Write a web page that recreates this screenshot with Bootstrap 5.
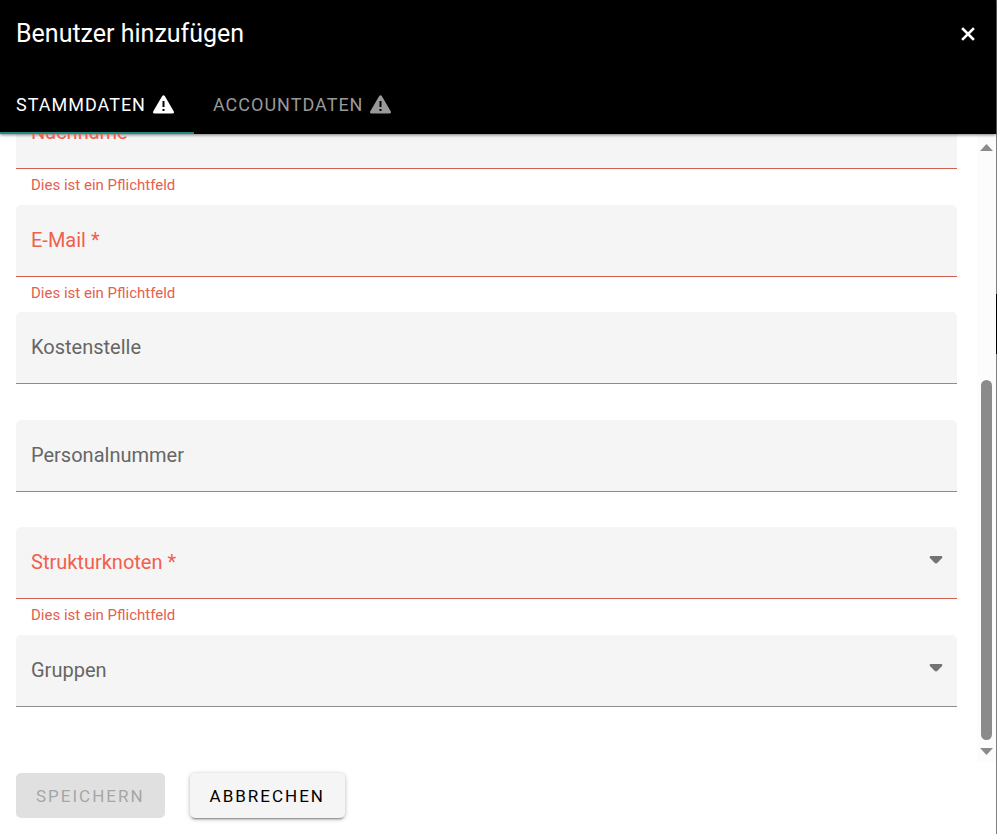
<!DOCTYPE html>
<html lang="de">
<head>
<meta charset="utf-8">
<meta name="viewport" content="width=device-width, initial-scale=1">
<title>Benutzer hinzufügen</title>
<link href="https://cdn.jsdelivr.net/npm/bootstrap@5.3.0/dist/css/bootstrap.min.css" rel="stylesheet">
<style>
  body { font-family: Roboto, "Liberation Sans", sans-serif; color: #000; background: #fff; }
  .dialog { flex: 1 1 0; min-width: 0; }
  /* sliver of the page behind the dialog */
  .backdrop-edge { flex: 0 0 1px; background: linear-gradient(#666 134px, #808080 134px 294px, #000 294px 354px, #808080 354px); }
  .dialog-head { background: #000; color: #fff; z-index: 1; box-shadow: 0 1px 3px rgba(0,0,0,.5); }
  .title-row { padding: 18px 16px 24px; }
  .dialog-title { font-size: 25px; line-height: 32px; font-weight: 400; }
  .close-btn { width: 24px; height: 24px; color: #fff; }
  .tab-btn { padding: 4px 20px 0 16px; height: 60px; border: 0; border-bottom: 2px solid transparent; border-radius: 0; background: none; color: #999; font-size: 18px; line-height: 24px; font-weight: 400; letter-spacing: 1px; gap: 7px; }
  .tab-btn + .tab-btn { padding-left: 19px; }
  .tab-btn svg { margin-bottom: 2px; }
  .tab-btn.active { color: #fff; border-bottom-color: #1c8c7e; }
  .scroll-view { flex: 1 1 0; min-height: 0; }
  .form-area { padding: 0 20px 20px 16px; }
  .field { min-height: 108px; flex-shrink: 0; }
  .field:nth-child(even) { min-height: 107px; }
  .field-box { display: grid; height: 72px; background: #f5f5f5; border-radius: 5px 5px 0 0; border-bottom: 1px solid #8c8c8c; align-items: center; }
  .field-box > * { grid-area: 1 / 1; }
  .field-label { padding: 0 15px 2px; font-size: 20px; line-height: 24px; color: #666; z-index: 1; pointer-events: none; }
  .field-input { width: 100%; height: 100%; padding: 24px 15px 8px; font-size: 20px; background: none; border: 0; appearance: none; outline: 0; }
  .arrow { justify-self: end; margin: 0 14px 6px 0; pointer-events: none; }
  .field-error { padding: 6px 15px 0; font-size: 15px; line-height: 20px; color: #e4604f; }
  .invalid-state .field-box { border-bottom-color: #d25f52; }
  .invalid-state .field-label { color: #f0604e; }
  .scroll-track { flex: 0 0 19px; background: #fcfcfc; padding: 10px 3px 7px 3px; }
  .scroll-thumb { width: 11px; height: 59%; border-radius: 6px; background: #8b8b8b; }
  .action { height: 45px; padding: 0 20px; border: 0; border-radius: 5px; font-size: 17px; line-height: 24px; font-weight: 400; letter-spacing: 2px; }
  .action-save, .action-save:disabled { background: #e0e0e0; color: #a6a6a6; opacity: 1; }
  .action-cancel { background: #f5f5f5; color: #000; box-shadow: 0 3px 2px -2px rgba(0,0,0,.35), 0 1px 4px rgba(0,0,0,.3); }
  .actions { padding: 11px 16px 16px; gap: 25px; }
</style>
</head>
<body>
<div class="d-flex vh-100 overflow-hidden">
  <main class="dialog d-flex flex-column">
    <header class="dialog-head">
      <div class="title-row d-flex align-items-center justify-content-between">
        <h1 class="dialog-title mb-0 mt-0">Benutzer hinzufügen</h1>
        <button type="button" class="close-btn btn p-0 d-flex align-items-center justify-content-center" aria-label="Schließen">
          <svg width="14" height="14" viewBox="0 0 14 14" fill="none" stroke="currentColor" stroke-width="2.6" stroke-linecap="square"><path d="M2 2l10 10M12 2L2 12"/></svg>
        </button>
      </div>
      <div class="d-flex" role="tablist">
        <button type="button" role="tab" aria-selected="true" class="tab-btn active d-flex align-items-center"><span>STAMMDATEN</span>
          <svg width="21" height="19" viewBox="0 0 21 19"><path fill="currentColor" d="M9.2 1.1Q10.5-.8 11.8 1.1L20.7 16.3Q21.5 18.4 19.3 18.5H1.7Q-.5 18.4.3 16.3Z"/><path stroke="#000" stroke-width="2" d="M10.5 6v6M10.5 14v2"/></svg>
        </button>
        <button type="button" role="tab" aria-selected="false" class="tab-btn d-flex align-items-center"><span>ACCOUNTDATEN</span>
          <svg width="21" height="19" viewBox="0 0 21 19"><path fill="currentColor" d="M9.2 1.1Q10.5-.8 11.8 1.1L20.7 16.3Q21.5 18.4 19.3 18.5H1.7Q-.5 18.4.3 16.3Z"/><path stroke="#000" stroke-width="2" d="M10.5 6v6M10.5 14v2"/></svg>
        </button>
      </div>
    </header>
    <div class="scroll-view d-flex">
      <form id="user-form" class="form-area flex-grow-1 d-flex flex-column justify-content-end overflow-hidden">
        <div class="field invalid-state">
          <div class="field-box"><label class="field-label" for="nachname">Nachname *</label><input class="field-input" id="nachname" type="text" aria-describedby="e1"></div>
          <div class="field-error" id="e1">Dies ist ein Pflichtfeld</div>
        </div>
        <div class="field invalid-state">
          <div class="field-box"><label class="field-label" for="email">E-Mail *</label><input class="field-input" id="email" type="email" aria-describedby="e2"></div>
          <div class="field-error" id="e2">Dies ist ein Pflichtfeld</div>
        </div>
        <div class="field">
          <div class="field-box"><label class="field-label" for="kosten">Kostenstelle</label><input class="field-input" id="kosten" type="text"></div>
        </div>
        <div class="field">
          <div class="field-box"><label class="field-label" for="personal">Personalnummer</label><input class="field-input" id="personal" type="text"></div>
        </div>
        <div class="field invalid-state">
          <div class="field-box"><label class="field-label" for="knoten">Strukturknoten *</label><select class="field-input" id="knoten" aria-describedby="e3"><option value=""></option></select>
            <svg class="arrow" width="14" height="8" viewBox="0 0 14 8"><path fill="#737373" d="M1.5 0h11q1.3.5.8 1.7L8.5 6.8Q7 8 5.5 6.8L.7 1.7Q.2.5 1.5 0Z"/></svg></div>
          <div class="field-error" id="e3">Dies ist ein Pflichtfeld</div>
        </div>
        <div class="field">
          <div class="field-box"><label class="field-label" for="gruppen">Gruppen</label><select class="field-input" id="gruppen"><option value=""></option></select>
            <svg class="arrow" width="14" height="8" viewBox="0 0 14 8"><path fill="#737373" d="M1.5 0h11q1.3.5.8 1.7L8.5 6.8Q7 8 5.5 6.8L.7 1.7Q.2.5 1.5 0Z"/></svg></div>
        </div>
      </form>
      <div class="scroll-track d-flex flex-column align-items-center" aria-hidden="true">
        <svg width="13" height="7" viewBox="0 0 13 7"><path fill="#8b8b8b" d="M0 7L6.5 0 13 7Z"/></svg>
        <div class="flex-grow-1"></div>
        <div class="scroll-thumb mb-2"></div>
        <svg width="13" height="7" viewBox="0 0 13 7"><path fill="#8b8b8b" d="M0 0L6.5 7 13 0Z"/></svg>
      </div>
    </div>
    <footer class="actions d-flex">
      <button type="submit" form="user-form" class="action action-save btn" disabled>SPEICHERN</button>
      <button type="button" class="action action-cancel btn">ABBRECHEN</button>
    </footer>
  </main>
  <div class="backdrop-edge"></div>
</div>
<script src="https://cdn.jsdelivr.net/npm/bootstrap@5.3.0/dist/js/bootstrap.bundle.min.js"></script>
</body>
</html>
